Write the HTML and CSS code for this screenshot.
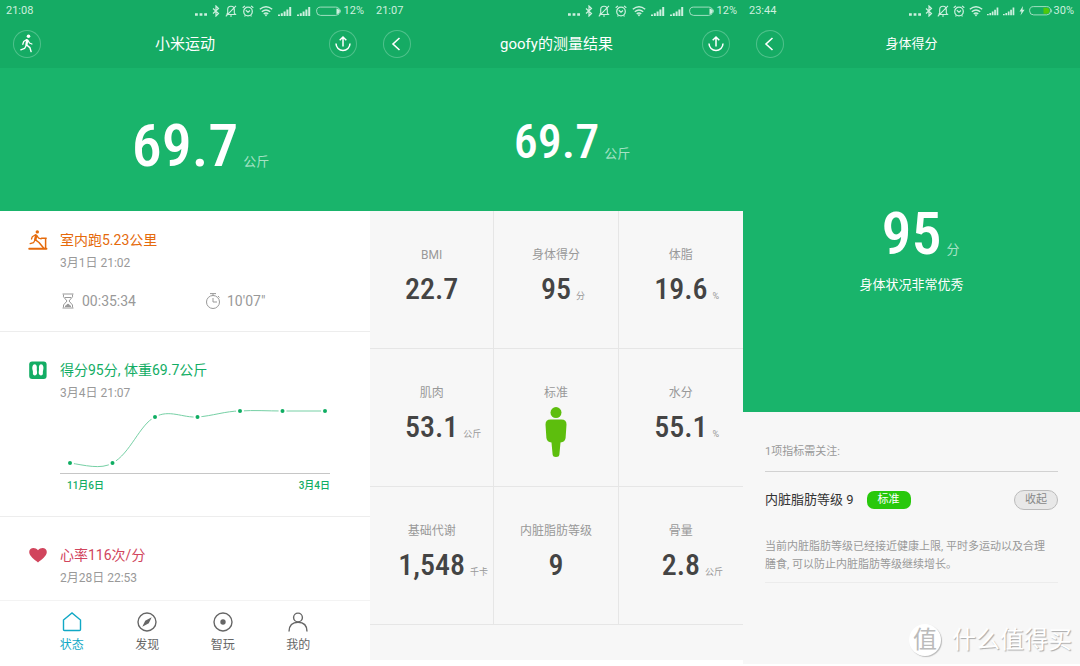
FILE: index.html
```html
<!DOCTYPE html>
<html lang="zh-CN">
<head>
<meta charset="utf-8">
<meta name="viewport" content="width=device-width, initial-scale=1">
<title>小米运动</title>
<link rel="stylesheet" href="styles.css">
</head>
<body>
<svg class="sprite" aria-hidden="true">
  <symbol id="dots" viewBox="0 0 12 12"><path fill="currentColor" d="M0 8.200h2.800v2.600H0zM4.600 8.200h2.800v2.600H4.600zM9.200 8.200H12v2.600H9.200z"/></symbol>
  <symbol id="bluetooth" viewBox="0 0 8 12"><path fill="none" stroke="currentColor" stroke-width="1.200" d="M1 3.500l5.500 5L4 11V1l2.500 2.500L1 8.500"/></symbol>
  <symbol id="mute" viewBox="0 0 12 12"><path fill="none" stroke="currentColor" stroke-width="1.100" d="M1.500 9.500h9L9.300 8V4.500C9.300 2.500 8 1.300 6 1.300S2.700 2.500 2.700 4.500V8L1.500 9.500M5 11h2M.8 11.300L11 .8"/></symbol>
  <symbol id="alarm" viewBox="0 0 12 12"><g fill="none" stroke="currentColor" stroke-width="1.200"><circle cx="6" cy="6.500" r="4.300"/><path d="M3.800 5.300L6 7.200l2-1.700M.7 2.800L3 .9M11.300 2.800L9 .9M2.500 11.300l1-1M9.500 11.300l-1-1"/></g></symbol>
  <symbol id="wifi" viewBox="0 0 14 12"><g fill="none" stroke="currentColor" stroke-width="1.400"><path d="M.8 4.300Q7-.8 13.200 4.300M2.800 6.700Q7 3.200 11.200 6.700M4.700 8.900Q7 7.200 9.300 8.900"/></g><path fill="currentColor" d="M5.600 9.700Q7 8.700 8.400 9.700L7 11.500z"/></symbol>
  <symbol id="signal" viewBox="0 0 14 12"><path fill="currentColor" d="M0 9.500h2V11H0zM2.800 8.300h2V11h-2zM5.600 6.600h2V11h-2zM8.400 4.500h2V11h-2zM11.200 2h2v9h-2z"/></symbol>
  <symbol id="battery" viewBox="0 0 26 12"><rect x=".6" y="2.100" width="23" height="8.300" rx="4" fill="none" stroke="currentColor" stroke-opacity=".75"/><path fill="currentColor" d="M20.500 3.400q3 .3 3 2.900t-3 2.900zM24.300 4q1.700 2.300 0 4.600z"/></symbol>
  <symbol id="battery-charge" viewBox="0 0 24 12"><rect x=".6" y="1.600" width="21" height="8.300" rx="4" fill="none" stroke="currentColor" stroke-opacity=".75"/><path fill="#4fc80a" d="M14.500 2.700h3.800q2.200.4 2.200 3t-2.200 3h-3.800z"/><path fill="currentColor" d="M22.300 3.500q1.600 2.300 0 4.600z"/></symbol>
  <symbol id="bolt" viewBox="0 0 6 12"><path fill="currentColor" d="M4 1L.5 6.500h2L1.500 10.500 5.600 4.800H3.500z"/></symbol>
  <symbol id="back" viewBox="0 0 28 28"><path fill="none" stroke="currentColor" stroke-width="1.600" d="M16.500 8L10 14l6.500 6"/></symbol>
  <symbol id="share" viewBox="0 0 28 28"><path fill="none" stroke="currentColor" stroke-width="1.500" d="M7 13.500a7 7 0 0 0 14 0M14 16.500V7M10.700 10.300L14 7l3.300 3.300"/></symbol>
  <symbol id="runner" viewBox="0 0 28 28"><circle cx="15.500" cy="6.300" r="1.800" fill="currentColor"/><g fill="none" stroke="currentColor" stroke-linecap="round" stroke-linejoin="round"><path stroke-width="1.300" d="M13.700 9.600l-3 1.900-.9 2.800M15 10.500l1.500 2.500 2.400 1M13.300 15.500l-1.700 2.900-3.800 1.400"/><path stroke-width="2.300" d="M14.200 10.300l-.8 4.600"/><path stroke-width="1.500" d="M13.700 15l3.200 2.600 1.200 4"/></g></symbol>
</svg>

<main class="board">
  <section class="phone">
    <header class="top">
      <div class="status"><time>21:08</time>
        <div class="signals">
          <svg class="w12"><use href="#dots"/></svg><svg class="w8"><use href="#bluetooth"/></svg><svg class="w12"><use href="#mute"/></svg><svg class="w12"><use href="#alarm"/></svg><svg class="w14"><use href="#wifi"/></svg><svg class="w14"><use href="#signal"/></svg><svg class="w14"><use href="#signal"/></svg><svg class="w26"><use href="#battery"/></svg><span>12%</span>
        </div>
      </div>
      <div class="bar">
        <button class="round" aria-label="运动"><svg><use href="#runner"/></svg></button>
        <h1>小米运动</h1>
        <button class="round" aria-label="分享"><svg><use href="#share"/></svg></button>
      </div>
    </header>
    <div class="hero"><div class="reading large"><strong>69.7</strong><span>公斤</span></div></div>
    <div class="feed">
      <article class="entry run">
        <svg class="mark" viewBox="0 0 20 20" fill="none" stroke="currentColor" stroke-linecap="round" stroke-linejoin="round"><circle cx="9.300" cy="1.900" r="1.700" fill="currentColor" stroke="none"/><path stroke-width="1.300" d="M7.500 4.800L4.300 6.700 3.500 9M9 6l1.700 2.200 2.500.7M7 10l-1.500 2.700-3.300 1"/><path stroke-width="2.500" d="M8.200 5.600L7.300 9.500"/><path stroke-width="1.500" d="M7.500 9.800l3.500 2.700 5 6M13.500 8.300h4.700M17.600 8.500v10"/><path stroke-width="1.900" d="M1.200 18.700h17.300"/></svg>
        <div class="detail">
          <h2>室内跑5.23公里</h2>
          <p>3月1日 21:02</p>
          <div class="stats">
            <span><svg viewBox="0 0 16 16" fill="none" stroke="currentColor"><path d="M2.500 1h11M2.500 15h11M3.500 1.500v2.300L7 8l-3.500 4v2.500M12.500 1.500v2.300L9 8l3.500 4v2.500M5 4.500h6"/><path fill="currentColor" d="M5 13.500L8 11l3 2.500z"/></svg>00:35:34</span>
            <span><svg viewBox="0 0 16 16" fill="none" stroke="currentColor"><circle cx="8" cy="9" r="6.500"/><path d="M5 .6h6M8 .6v2M8 5v4h4M13 3l1.500 1.500"/></svg>10'07"</span>
          </div>
        </div>
      </article>
      <article class="entry weight">
        <svg class="mark" viewBox="0 0 20 20"><rect x="1.200" y="1.500" width="17.400" height="17.400" rx="3" fill="currentColor"/><path fill="#fff" d="M6.800 4.200C8.700 4.200 9 6.500 8.800 8.500c-.2 2 .5 2.800.2 5-.2 1.700-2.400 2.600-3.700 1.200-.8-.9 0-2.200-.6-4.200C3.800 7.300 4.500 4.200 6.800 4.200zM13 4.200c-1.900 0-2.200 2.300-2 4.300.2 2-.5 2.800-.2 5 .2 1.700 2.400 2.600 3.700 1.200.8-.9 0-2.200.6-4.200.9-3.200.2-6.300-2.100-6.300z"/></svg>
        <div class="detail">
          <h2>得分95分, 体重69.7公斤</h2>
          <p>3月4日 21:07</p>
          <svg class="chart" viewBox="0 0 270 72" role="img" aria-label="体重变化">
            <path class="curve" d="M10 61C24 63 41 68 52.500 61C70 52 80 22 95 15C109 7 123 16 137.500 15C152 14 166 9 180 9C194 8 208 9 222.500 9L265 9"/>
            <path class="axis" d="M0 71.500h270"/>
            <g class="points"><circle cx="10" cy="61" r="3"/><circle cx="52.500" cy="61" r="3"/><circle cx="95" cy="15" r="3"/><circle cx="137.500" cy="15" r="3"/><circle cx="180" cy="9" r="3"/><circle cx="222.500" cy="9" r="3"/><circle cx="265" cy="9" r="3"/></g>
          </svg>
          <div class="range"><span>11月6日</span><span>3月4日</span></div>
        </div>
      </article>
      <article class="entry heart">
        <svg class="mark" viewBox="0 0 20 20"><path fill="currentColor" d="M10 17.500C6.500 14.500 1.200 11 1.200 7c0-4.500 6-5.400 8.800-1.700C12.800 1.600 18.800 2.500 18.800 7c0 4-5.300 7.500-8.800 10.500z"/></svg>
        <div class="detail"><h2>心率116次/分</h2><p>2月28日 22:53</p></div>
      </article>
    </div>
    <nav class="tabs">
      <a href="#" class="active"><svg viewBox="0 0 20 20"><path d="M1.500 8L10 1l8.500 7v9.500q0 1-1 1h-15q-1 0-1-1z"/></svg>状态</a>
      <a href="#"><svg viewBox="0 0 20 20"><circle cx="10" cy="10" r="9"/><path fill="currentColor" stroke="none" d="M14.700 5.300L11.800 11.200 5.300 14.700 8.200 8.800z"/></svg>发现</a>
      <a href="#"><svg viewBox="0 0 20 20"><circle cx="10" cy="10" r="9"/><circle cx="10" cy="10" r="2.700" fill="currentColor" stroke="none"/></svg>智玩</a>
      <a href="#"><svg viewBox="0 0 20 20"><circle cx="10" cy="5.500" r="4.400"/><path d="M1 19.500C1 13.500 4.500 10.200 10 10.200S19 13.500 19 19.500"/></svg>我的</a>
    </nav>
  </section>

  <section class="phone">
    <header class="top">
      <div class="status"><time>21:07</time>
        <div class="signals">
          <svg class="w12"><use href="#dots"/></svg><svg class="w8"><use href="#bluetooth"/></svg><svg class="w12"><use href="#mute"/></svg><svg class="w12"><use href="#alarm"/></svg><svg class="w14"><use href="#wifi"/></svg><svg class="w14"><use href="#signal"/></svg><svg class="w14"><use href="#signal"/></svg><svg class="w26"><use href="#battery"/></svg><span>12%</span>
        </div>
      </div>
      <div class="bar">
        <button class="round" aria-label="返回"><svg><use href="#back"/></svg></button>
        <h1>goofy的测量结果</h1>
        <button class="round" aria-label="分享"><svg><use href="#share"/></svg></button>
      </div>
    </header>
    <div class="hero"><div class="reading medium"><strong>69.7</strong><span>公斤</span></div></div>
    <div class="metrics">
      <div class="cell"><h3>BMI</h3><div class="reading"><strong>22.7</strong></div></div>
      <div class="cell"><h3>身体得分</h3><div class="reading"><strong>95</strong><span>分</span></div></div>
      <div class="cell"><h3>体脂</h3><div class="reading"><strong>19.6</strong><span>%</span></div></div>
      <div class="cell"><h3>肌肉</h3><div class="reading"><strong>53.1</strong><span>公斤</span></div></div>
      <div class="cell"><h3>标准</h3><svg class="body-shape" viewBox="0 0 22 50"><circle cx="11" cy="5.600" r="5.500"/><path d="M5.500 12.500h11q5 0 5 5L20.600 31q-.6 4-5.100 4.500L14.400 47.500q-.3 2.500-3.400 2.500t-3.400-2.500L6.500 35.500Q2 35 1.400 31L.5 17.500q0-5 5-5z"/></svg></div>
      <div class="cell"><h3>水分</h3><div class="reading"><strong>55.1</strong><span>%</span></div></div>
      <div class="cell"><h3>基础代谢</h3><div class="reading"><strong>1,548</strong><span>千卡</span></div></div>
      <div class="cell"><h3>内脏脂肪等级</h3><div class="reading"><strong>9</strong></div></div>
      <div class="cell"><h3>骨量</h3><div class="reading"><strong>2.8</strong><span>公斤</span></div></div>
    </div>
  </section>

  <section class="phone score">
    <header class="top">
      <div class="status"><time>23:44</time>
        <div class="signals">
          <svg class="w12"><use href="#dots"/></svg><svg class="w8"><use href="#bluetooth"/></svg><svg class="w12"><use href="#mute"/></svg><svg class="w12"><use href="#alarm"/></svg><svg class="w14"><use href="#wifi"/></svg><svg class="w12"><use href="#signal"/></svg><svg class="w12"><use href="#signal"/></svg><svg class="w6"><use href="#bolt"/></svg><svg class="w24"><use href="#battery-charge"/></svg><span>30%</span>
        </div>
      </div>
      <div class="bar">
        <button class="round" aria-label="返回"><svg><use href="#back"/></svg></button>
        <h1>身体得分</h1>
      </div>
    </header>
    <div class="hero tall"><div class="reading large"><strong>95</strong><span>分</span></div><p>身体状况非常优秀</p></div>
    <div class="advice">
      <p class="notice">1项指标需关注:</p>
      <div class="finding"><h2>内脏脂肪等级 9</h2><span class="tag">标准</span><button class="fold">收起</button></div>
      <p class="text">当前内脏脂肪等级已经接近健康上限, 平时多运动以及合理膳食, 可以防止内脏脂肪等级继续增长。</p>
    </div>
    <div class="watermark"><span class="badge">值</span><span>什么值得买</span></div>
  </section>
</main>
</body>
</html>
```

FILE: styles.css
```css
* { box-sizing: border-box; margin: 0; }

body {
  background: #fff;
  color: #444;
  font-family: Roboto, "Noto Sans CJK SC", sans-serif;
  font-size: 12px;
  line-height: 16px;
}

h1, h2, h3 { font-weight: 400; }
svg { display: block; flex: none; }
button { border: 0; padding: 0; background: none; color: inherit; font: inherit; }
.sprite { position: absolute; width: 0; height: 0; }

.board {
  display: grid;
  grid-template-columns: 370fr 373fr 337fr;
  align-items: start;
}
.phone { position: relative; min-width: 0; }

/* Header */
.top { background: #15ab64; color: #fff; padding-bottom: 10px; }
.status {
  display: flex;
  justify-content: space-between;
  padding: 3px 6px 1px;
  font-size: 11px;
  color: #cdf0df;
}
.signals { display: flex; align-items: center; gap: 5px; }
.signals svg { height: 12px; }
.signals span { margin-left: -3px; }
.w6 { width: 6px; }
.w8 { width: 8px; }
.w12 { width: 12px; }
.w14 { width: 14px; }
.w24 { width: 24px; }
.w26 { width: 26px; }
.bar {
  display: grid;
  grid-template-columns: 28px 1fr 28px;
  align-items: center;
  padding: 10px 13px 0;
}
.bar h1 { font-size: 15px; line-height: 20px; text-align: center; }
.round {
  width: 28px;
  height: 28px;
  border-radius: 50%;
  box-shadow: inset 0 0 0 1px #4fc18b;
}
.round svg { width: 28px; height: 28px; }

/* Numeric readings */
.hero {
  background: #19b46b;
  color: #fff;
  height: 143px;
  padding-top: 42px;
}
.reading {
  display: grid;
  grid-template-columns: 1fr auto 1fr;
  align-items: baseline;
  column-gap: 5px;
  text-align: left;
}
.reading strong {
  grid-column: 2;
  font-family: "Roboto Condensed", "Liberation Sans Narrow", Roboto, sans-serif;
  font-size: 30px;
  line-height: 40px;
  font-weight: 500;
}
.reading span { font-size: 9px; color: #999; white-space: nowrap; }
.hero .reading span { font-size: 13px; color: #a6e2c5; }
.hero .large strong { font-size: 60px; line-height: 72px; }
.hero .medium strong { font-size: 48px; line-height: 64px; }

/* Activity feed */
.entry {
  display: flex;
  gap: 12px;
  padding: 19px 40px 20px 28px;
  border-bottom: 1px solid #ededed;
}
.mark { width: 20px; height: 20px; }
.detail { flex: 1; min-width: 0; }
.detail h2 { font-size: 14px; line-height: 20px; }
.detail p { margin-top: 4px; line-height: 18px; color: #999; }
.run .mark, .run h2 { color: #e56a0b; }
.weight .mark, .weight h2, .range { color: #12ad64; }
.heart .mark, .heart h2 { color: #d1455d; }
.entry.weight { padding-top: 28px; padding-bottom: 18px; }
.entry.heart { padding-top: 28px; padding-bottom: 13px; border: 0; }
.stats {
  display: grid;
  grid-template-columns: 145fr 125fr;
  margin-top: 19px;
  color: #999;
  font-size: 14px;
  line-height: 20px;
}
.stats span { display: flex; align-items: center; gap: 6px; }
.stats svg { width: 16px; height: 16px; }
.chart { width: 100%; }
.curve { fill: none; stroke: #76d0a5; }
.axis { stroke: #c6c6c6; }
.points circle { fill: #0fad62; stroke: #fff; stroke-width: 2; }
.range {
  display: flex;
  justify-content: space-between;
  padding: 4px 0 4px 7px;
  font-size: 10px;
  font-weight: 500;
}

/* Tab bar */
.tabs {
  display: grid;
  grid-template-columns: repeat(4, 1fr);
  padding: 11px 34px 8px;
  border-top: 1px solid #f3f3f3;
}
.tabs a {
  display: flex;
  flex-direction: column;
  align-items: center;
  gap: 5px;
  color: #666;
  text-decoration: none;
}
.tabs svg { width: 20px; height: 20px; fill: none; stroke: currentColor; stroke-width: 1.4px; }
.tabs .active { color: #11a8c5; }

/* Measurement grid */
.metrics {
  display: grid;
  grid-template-columns: repeat(3, 1fr);
  padding-bottom: 35px;
  background: #f7f7f7;
}
.cell {
  height: 138px;
  padding-top: 36px;
  border-right: 1px solid #e6e6e6;
  border-bottom: 1px solid #e6e6e6;
}
.cell:nth-child(3n) { border-right: 0; }
.cell h3 { font-size: 12px; text-align: center; color: #999; }
.cell .reading { margin-top: 6px; }
.body-shape { width: 22px; height: 50px; margin: 6px auto 0; fill: #5dbe0d; }

/* Body score */
.score { background: #f7f7f7; }
.score .signals { gap: 4px; }
.score h1 { font-size: 13px; }
.tall { height: 344px; padding-top: 130px; text-align: center; }
.tall p { margin-top: 7px; font-size: 13px; }
.advice { padding: 32px 22px 81px; font-size: 11px; color: #999; }
.notice { padding-bottom: 11px; border-bottom: 1px solid #d2d2d2; }
.finding { display: flex; align-items: center; padding-top: 18px; }
.finding h2 { font-size: 13px; color: #333; }
.tag {
  margin-left: 13px;
  padding: 1px 11px;
  border-radius: 7px;
  background: #28c80c;
  color: #fff;
}
.fold {
  margin-left: auto;
  padding: 1px 10px;
  border: 1px solid #bbb;
  border-radius: 10px;
  background: #e8e8e8;
  color: #888;
}
.text {
  padding: 28px 6px 8px 0;
  border-bottom: 1px solid #ececec;
  line-height: 18px;
}
.watermark {
  position: absolute;
  right: 8px;
  bottom: 8px;
  display: flex;
  align-items: center;
  gap: 11px;
  color: #fff;
  font-size: 24px;
  line-height: 32px;
  text-shadow: 1px 1px 1px #aaa;
}
.badge {
  width: 32px;
  height: 32px;
  border-radius: 50%;
  background: #fff;
  box-shadow: 1px 1px 1px #bbb;
  color: #bbb;
  text-align: center;
  text-shadow: none;
}
```
